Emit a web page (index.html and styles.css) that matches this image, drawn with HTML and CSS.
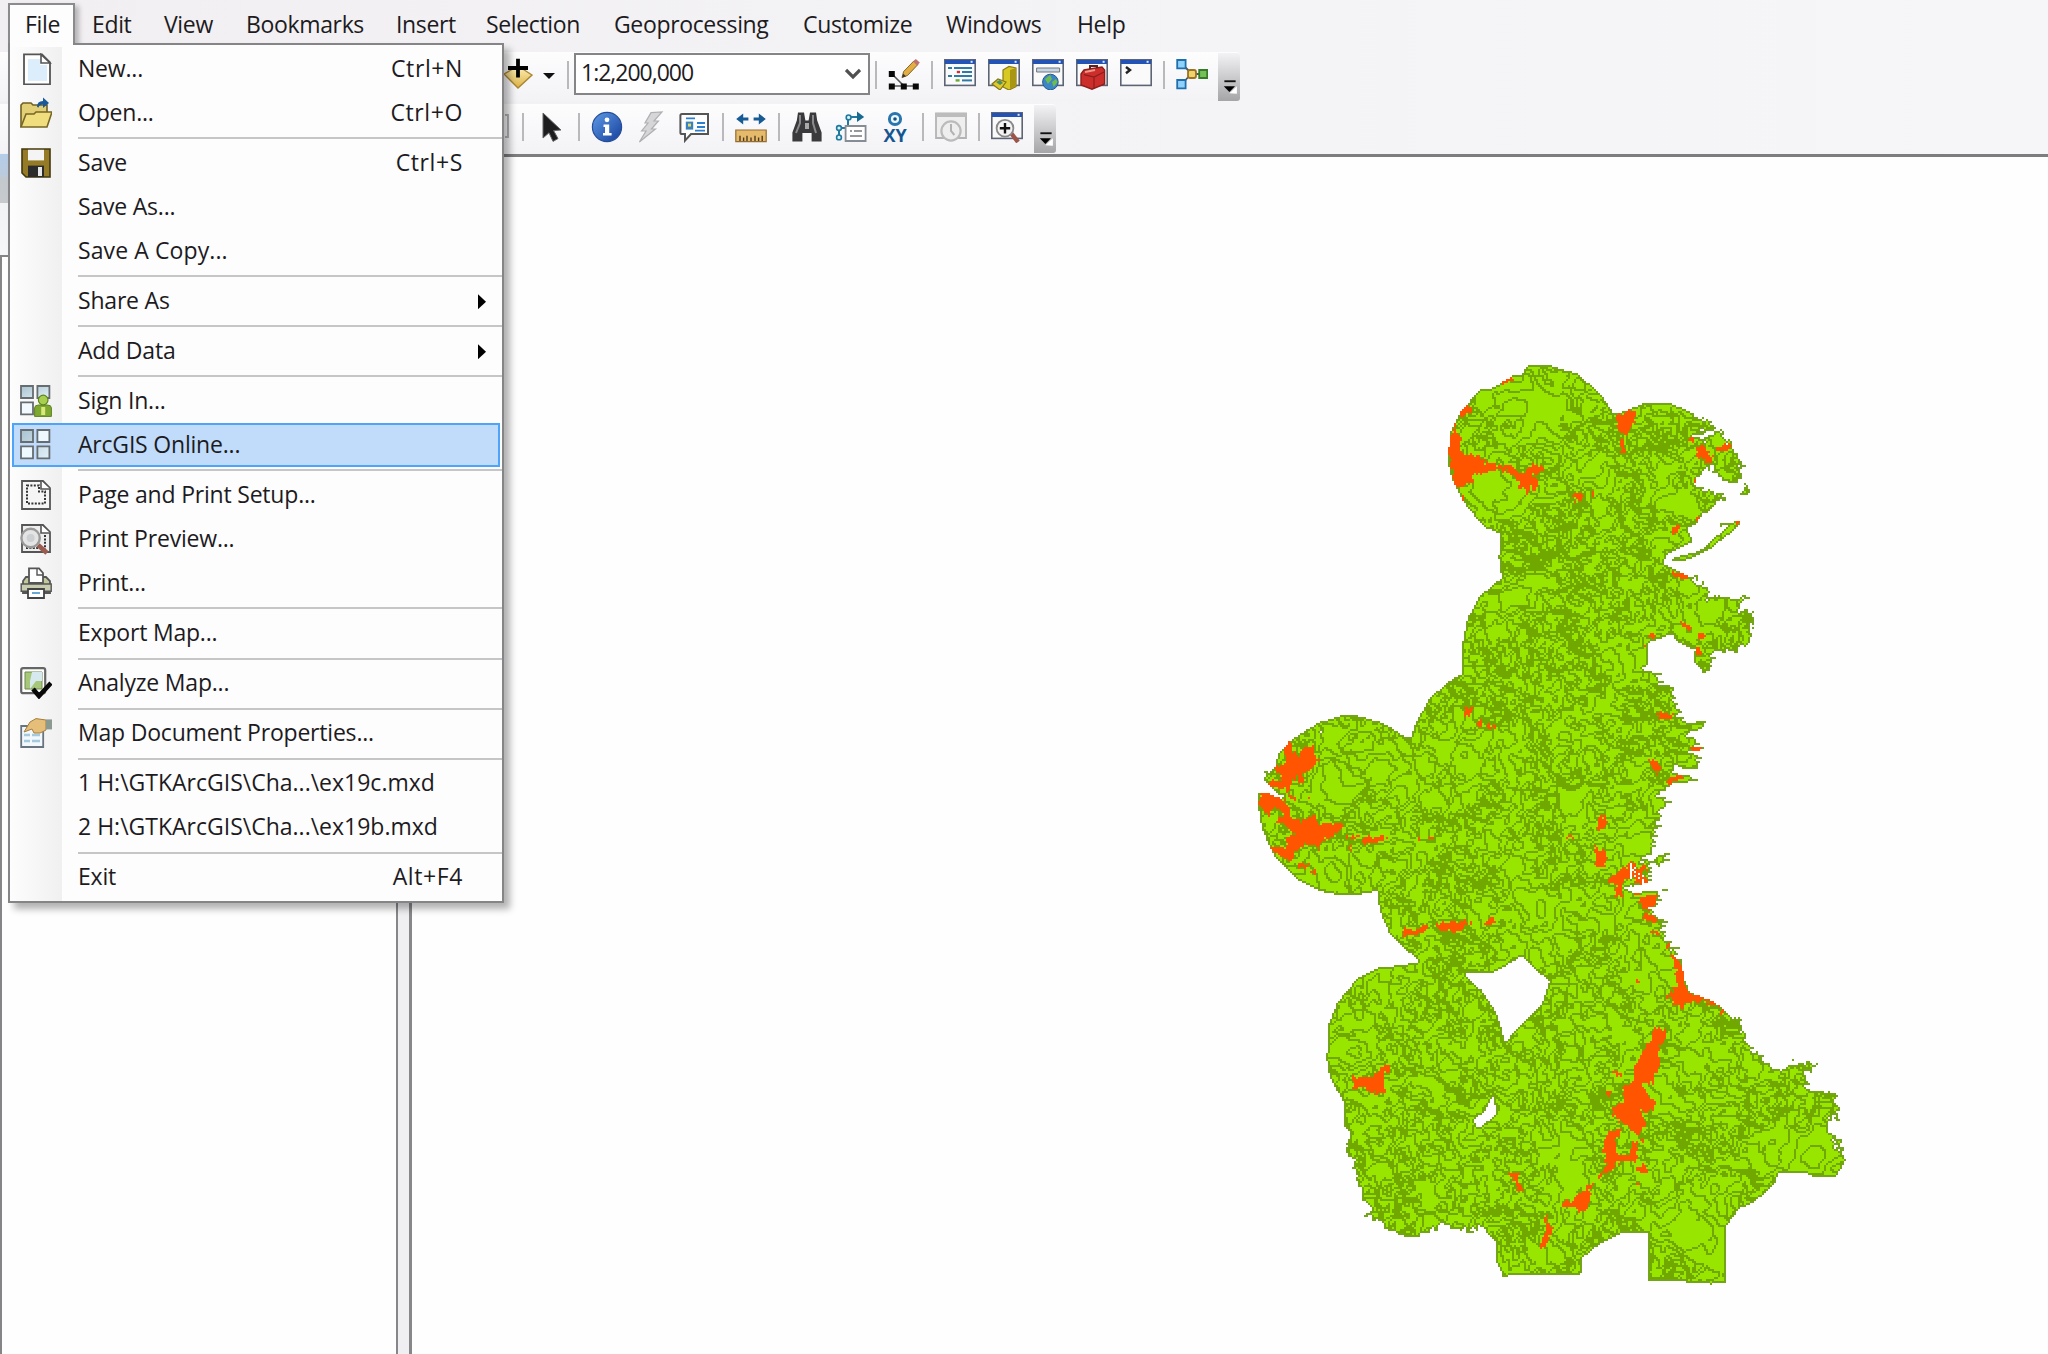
FILE: index.html
```html
<!DOCTYPE html>
<html lang="en">
<head>
<meta charset="utf-8">
<title>ArcMap</title>
<link rel="stylesheet" href="styles.css">
</head>
<body>
<svg class="defs" width="0" height="0">
  <defs>
    <linearGradient id="tile" x1="0" y1="0" x2="1" y2="1"><stop offset="0" stop-color="#a9c3d0"/><stop offset="1" stop-color="#e3f1f8"/></linearGradient>
    <linearGradient id="gold" x1="0" y1="0" x2="0" y2="1"><stop offset="0" stop-color="#fff2b8"/><stop offset="1" stop-color="#dcb045"/></linearGradient>
    <linearGradient id="blue" x1="0" y1="0" x2="1" y2="1"><stop offset="0" stop-color="#5f9be6"/><stop offset="1" stop-color="#153f9b"/></linearGradient>
    <symbol id="win" viewBox="0 0 16 16"><rect x=".4" y=".9" width="15.2" height="12.8" fill="#fafafa" stroke="#5d6473" stroke-width=".8"/><path d="M.5 1h15v2H.5z" fill="#2253b5"/><path d="M13.3 1.4h1v1h-1z" fill="#dfe9ff"/></symbol>
  </defs>
</svg>
<div class="app">
  <nav class="menubar">
    <span class="open">File</span><span>Edit</span><span>View</span><span>Bookmarks</span><span>Insert</span><span>Selection</span><span>Geoprocessing</span><span>Customize</span><span>Windows</span><span>Help</span>
  </nav>
  <div class="toolbar standard">
    <div class="tool"><svg viewBox="0 0 16 16"><path d="M1 8l7-4 7 4.5L8 15z" fill="url(#gold)" stroke="#a98634" stroke-width=".7"/><path d="M8 .4v9.4M3 5h10" stroke="#000" stroke-width="1.9"/></svg></div>
    <div class="drop"></div>
    <i class="sep"></i>
    <div class="combo"><span>1:2,200,000</span><svg viewBox="0 0 16 12"><path d="M1 2l7 7 7-7" fill="none" stroke="#505050" stroke-width="3.2"/></svg></div>
    <i class="sep"></i>
    <div class="tool"><svg viewBox="0 0 16 16"><path d="M2 8l6 6M2 14h12" stroke="#555" stroke-width=".8"/><path d="M.4 6.5h3v3h-3zM.4 12.7h3v3h-3zM6.4 12.7h3v3h-3zM12.4 12.7h3v3h-3z" fill="#080808"/><path d="M7 9.8l.8-3L13 1.4l2 1.8-5.2 5.5z" fill="#e2ad42" stroke="#80662f" stroke-width=".5"/><path d="M12.6 1.8l1.3-1.3 2 1.8-1.3 1.4z" fill="#bd706e"/><path d="M7 9.8l.6-1.9 1.4 1.2z" fill="#333"/></svg></div>
    <i class="sep"></i>
    <div class="tool"><svg viewBox="0 0 16 16"><use href="#win"/><path d="M2 5h2M5 5h9M5 9h9M2 9h2" stroke="#2e7ba8"/><path d="M6.4 7h1.6" stroke="#c33" stroke-width="1.2"/><path d="M9 7h5" stroke="#2e7ba8"/><path d="M5.8 11.2h2" stroke="#6a3" stroke-width="1.2"/><path d="M9 11.2h5" stroke="#2e7ba8"/></svg></div>
    <div class="tool"><svg viewBox="0 0 16 16"><use href="#win"/><path d="M7.5 6l3-1.8L14 5v9.3L10.500 16l-3-1.500z" fill="#d8c824" stroke="#8a7c15" stroke-width=".6"/><path d="M11 6v9.500l3-1.500V5z" fill="#a99714"/><path d="M2 13l3-2.500 4 1.500-3 4z" fill="#dfc92d" stroke="#82761a" stroke-width=".6"/><path d="M4 12l2-1 1.500 1.500-1.500 1z" fill="#4a8f65"/></svg></div>
    <div class="tool"><svg viewBox="0 0 16 16"><use href="#win"/><path d="M2.300 5h11.500v2H2.300z" fill="#c5d7e7" stroke="#777" stroke-width=".5"/><circle cx="9.200" cy="12" r="3.900" fill="#3d86c6" stroke="#27598f" stroke-width=".5"/><path d="M6.500 10.500l2.500-2 1 2-2 2.500zM10 12l2-1.500.8 1.500-2 2.500z" fill="#6fbd4c"/></svg></div>
    <div class="tool"><svg viewBox="0 0 16 16"><use href="#win"/><path d="M2.500 8L4 6l9-1.500 1.300 1.500v7L8 15.600 2.500 13.500z" fill="#cc2f2b" stroke="#8e1e1c" stroke-width=".7"/><path d="M4 8.300l5 1.200 5-2.500M9 9.500v5.500" stroke="#8c1d1b" stroke-width=".6" fill="none"/><path d="M7 5.500V4h3.500v1" stroke="#5b2222" fill="none"/><path d="M4.500 7l5-1" stroke="#f09688" stroke-width=".9"/></svg></div>
    <div class="tool"><svg viewBox="0 0 16 16"><use href="#win"/><path d="M3 4.500l2 1.500-2 1.600" fill="none" stroke="#222" stroke-width="1.200"/></svg></div>
    <i class="sep"></i>
    <div class="tool"><svg viewBox="0 0 16 16"><path d="M3 3l5 5h5M3 13l4.500-5" stroke="#555" stroke-width=".9" fill="none"/><path d="M.6 1h4.200v4.200H.6zM.6 11h4.200v4.200H.6z" fill="#8fd1f8" stroke="#1e6eb0" stroke-width=".9"/><rect x="6" y="6" width="4" height="4" rx="1" fill="#f2d36b" stroke="#9a7423" stroke-width=".9"/><path d="M11.600 6h4v4h-4z" fill="#74c157" stroke="#377a29" stroke-width=".9"/></svg></div>
    <div class="overflow"><svg viewBox="0 0 11 12"><path d="M1 1h9" stroke="#111" stroke-width="1.500"/><path d="M5 10.500l6-5.500v6z" fill="#fff"/><path d="M.5 5h9L5 9.500z" fill="#000"/></svg></div>
  </div>
  <div class="toolbar tools">
    <i class="sliver"></i>
    <i class="sep"></i>
    <div class="tool"><svg viewBox="0 0 16 16"><path d="M4 1l9 8.500-3.700.3 2.200 4-2.500 1.400-2-4.300L4 13.500z" fill="#1d1d1f" stroke="#666" stroke-width=".5"/></svg></div>
    <i class="sep"></i>
    <div class="tool"><svg viewBox="0 0 16 16"><circle cx="8" cy="8" r="7.300" fill="url(#blue)" stroke="#244c97" stroke-width=".6"/><circle cx="8" cy="4.400" r="1.200" fill="#fff"/><path d="M6.300 6.700h2.800V11h1.200v1.300H6V11h1V8h-.8z" fill="#fff"/></svg></div>
    <div class="tool"><svg viewBox="0 0 16 16"><path d="M8 .8l5.500-.3L9.500 5h2.200L8.200 9h2L2.200 15.500 5.500 10H3.300L6.500 6H5z" fill="#d6d6d8" stroke="#b0b0b3" stroke-width=".6"/></svg></div>
    <div class="tool"><svg viewBox="0 0 16 16"><path d="M1.500 1.500h13v10H6l-3 3.300v-3.300H1.500q-.8 0-.8-.8V2.300q0-.8.800-.8z" fill="#fff" stroke="#555" stroke-width="1"/><path d="M3.500 3.700h4.500M9 6h4M9 8h4M8 9.800h5" stroke="#2b80cf" stroke-width=".9"/><path d="M3.400 5.300h3.700v4H3.400z" fill="#3a82bd"/><path d="M4.500 6.300h1.500v1.500H4.500z" fill="#e8dc58"/></svg></div>
    <i class="sep"></i>
    <div class="tool"><svg viewBox="0 0 16 16"><path d="M.6 4l3.500-2.700v1.900h2.600v1.600H4.100v1.900zM15.400 4l-3.500-2.700v1.900H9.300v1.600h2.600v1.900z" fill="#165b94"/><path d="M.4 9.500h15.200v5.800H.4z" fill="#e5bb6b" stroke="#966d30" stroke-width=".6"/><path d="M2.500 15v-2.600M4.300 15v-1.700M6 15v-2.600M8 15v-1.700M10 15v-2.600M11.800 15v-1.700M13.600 15v-2.600" stroke="#503c20" stroke-width=".7"/></svg></div>
    <i class="sep"></i>
    <div class="tool"><svg viewBox="0 0 16 16"><path d="M3.500.8h3l.7 4h1.600l.7-4h3l.6 4 2.200 6v4.500h-5V11H5.700v4.300h-5v-4.500l2.200-6z" fill="#3a3a3c"/><path d="M4.500 2v4L2.500 11M11 2v4l1.500 5" stroke="#8a8a8d" fill="none"/><path d="M7 6h2v3H7z" fill="#aaa"/></svg></div>
    <div class="tool"><svg viewBox="0 0 16 16"><path d="M2 13V8.500h4.500V3H12" fill="none" stroke="#21799e" stroke-width="1"/><path d="M11 .3L14.600 3 11 5.500z" fill="#176b92"/><g fill="#d7f1fa" stroke="#21799e" stroke-width=".8"><circle cx="2" cy="13.200" r="1.200"/><circle cx="2" cy="8.500" r="1.200"/><circle cx="6.800" cy="3.200" r="1.200"/></g><path d="M5.300 7.500h10v7.500h-10z" fill="#fff" stroke="#878d94" stroke-width=".9"/><path d="M7.500 10h1M9.500 10h4M7.500 12.500h6" stroke="#777" stroke-width=".8"/></svg></div>
    <div class="tool xy"><svg viewBox="0 0 16 8"><circle cx="8" cy="4" r="2.800" fill="#eaf7ff" stroke="#2b75ae" stroke-width="1.500"/><circle cx="8" cy="4" r=".9" fill="#16507e"/></svg><b>XY</b></div>
    <i class="sep"></i>
    <div class="tool"><svg viewBox="0 0 16 16"><path d="M.5 1.200h15v12.300H.5z" fill="#eee" stroke="#b3b3b3" stroke-width=".9"/><path d="M.5 1h15v2H.5z" fill="#bcbcbc"/><circle cx="8" cy="10" r="4.800" fill="#eee" stroke="#bbb" stroke-width="1.100"/><path d="M8 6.500V10l1.700 2" fill="none" stroke="#b2b2b2"/></svg></div>
    <i class="sep"></i>
    <div class="tool"><svg viewBox="0 0 16 16"><use href="#win"/><path d="M10 11l3.500 4.500" stroke="#9c5549" stroke-width="2.200"/><circle cx="7" cy="8.600" r="4.200" fill="#f4f4f4" stroke="#8a8a8a" stroke-width=".9"/><path d="M7 6v5.200M4.400 8.600h5.200" stroke="#111" stroke-width="1.200"/></svg></div>
    <div class="overflow"><svg viewBox="0 0 11 12"><path d="M1 1h9" stroke="#111" stroke-width="1.500"/><path d="M5 10.500l6-5.500v6z" fill="#fff"/><path d="M.5 5h9L5 9.500z" fill="#000"/></svg></div>
  </div>
  <main class="workspace">
    <aside class="contents"><div class="caption"></div><div class="captiontools"></div><div class="tree"></div></aside>
    <div class="splitter"></div>
    <section class="mapview"><canvas id="map" class="map" width="310" height="475"></canvas></section>
  </main>

  <div class="menu">
    <div class="row"><svg viewBox="0 0 16 16"><path d="M2 .7h9l4 4v11H2z" fill="#fff" stroke="#555" stroke-width=".9"/><path d="M4 3h6v3h3.500v8H4z" fill="#dceefb"/><path d="M10.500.7v4.300H15z" fill="#fff" stroke="#555" stroke-width=".8"/></svg><span>New...</span><kbd>Ctrl+N</kbd></div>
    <div class="row"><svg viewBox="0 0 16 16"><path d="M.5 15V4l1-1h4l1 1h7v4" fill="#e3cf76" stroke="#6f6022" stroke-width=".8"/><path d="M.5 15L3 8.500h4l1-1h8L13.500 15z" fill="#efdd7e" stroke="#776625" stroke-width=".8"/><path d="M8.500 5q0-3 3-3V.300L14.500 3l-3 2.500V3.800q-2 0-2.200 1.500z" fill="#19599a"/></svg><span>Open...</span><kbd>Ctrl+O</kbd></div>
    <hr>
    <div class="row"><svg viewBox="0 0 16 16"><path d="M1 1h14v14H3l-2-2z" fill="#957b26" stroke="#44380f" stroke-width=".8"/><path d="M4 1.400h8v5.300H4z" fill="#f4f4f4"/><path d="M4 9.300h8V15H4z" fill="#2c2c2c"/><path d="M9 10h2v4.500H9z" fill="#e8e8e8"/></svg><span>Save</span><kbd>Ctrl+S</kbd></div>
    <div class="row"><span>Save As...</span></div>
    <div class="row wide"><span>Save A Copy...</span></div>
    <hr>
    <div class="row"><span>Share As</span><i class="arrow"></i></div>
    <hr>
    <div class="row"><span>Add Data</span><i class="arrow"></i></div>
    <hr>
    <div class="row"><svg viewBox="0 0 16 16"><g fill="url(#tile)" stroke="#666c70" stroke-width=".9"><path d="M.5.500h6v6h-6zM8.700.500h6v6h-6z"/><path d="M.5 8.700h6v6h-6z" fill="#f3faff"/></g><path d="M7.300 15.700v-4.200q0-1.500 2-1.500h4.400q2 0 2 1.500v4.200z" fill="#7ea82f" stroke="#5c8321" stroke-width=".5"/><circle cx="11.600" cy="7.500" r="2.400" fill="#a9cf4f" stroke="#5c8321" stroke-width=".6"/><path d="M11.600 11v4" stroke="#d6ea7d" stroke-width="2"/></svg><span>Sign In...</span></div>
    <div class="row selected"><svg viewBox="0 0 16 16"><g fill="url(#tile)" stroke="#666c70" stroke-width=".9"><path d="M.5.500h6v6h-6zM8.700 8.700h6v6h-6z"/><path d="M.5 8.700h6v6h-6zM8.700.500h6v6h-6z" fill="#eef8ff"/></g></svg><span>ArcGIS Online...</span></div>
    <hr>
    <div class="row"><svg viewBox="0 0 16 16"><path d="M1 1h10.500L15 4.500V15H1z" fill="#f5f5f5" stroke="#555" stroke-width=".9"/><path d="M10.500 1v4H15" fill="#fff" stroke="#555" stroke-width=".8"/><path d="M3.500 3.200h6v3h3v6h-9z" fill="none" stroke="#333" stroke-dasharray="1 .7"/></svg><span>Page and Print Setup...</span></div>
    <div class="row"><svg viewBox="0 0 16 16"><path d="M1 1h10.500L15 4.500V14.500H1z" fill="#eee" stroke="#555" stroke-width=".9"/><path d="M10.500 1v4H15" fill="#fff" stroke="#555" stroke-width=".8"/><path d="M12.500 6v7M3 12.500h6" stroke="#333" stroke-dasharray="1 .7"/><path d="M9 11l4.500 4" stroke="#9b5c50" stroke-width="2.400"/><circle cx="5.300" cy="7.500" r="4.600" fill="#e4e4e4" stroke="#999" stroke-width="1.200"/><circle cx="5.300" cy="7.500" r="2" fill="#ccd0d2"/></svg><span>Print Preview...</span></div>
    <div class="row"><svg viewBox="0 0 16 16"><path d="M1.500 13V7L3 5h10l2 2v6z" fill="#c2c79c" stroke="#555" stroke-width=".9"/><path d="M4.500 8V.700h5L11.500 3v5z" fill="#fff" stroke="#555" stroke-width=".9"/><path d="M8.500.700V4h3" fill="none" stroke="#555" stroke-width=".7"/><path d="M.6 8.500h15v3.600H.6z" fill="#c9cdb0" stroke="#555" stroke-width=".7"/><path d="M4 11h8v4.500H4z" fill="#fff" stroke="#444" stroke-width=".9"/><path d="M6 13h4" stroke="#6ba7d3"/></svg><span>Print...</span></div>
    <hr>
    <div class="row"><span>Export Map...</span></div>
    <hr>
    <div class="row"><svg viewBox="0 0 16 16"><rect x=".6" y=".6" width="12" height="12.500" rx="1" fill="#fff" stroke="#666" stroke-width="1.100"/><path d="M2.500 2.500h8.500v8.500H2.500z" fill="#a8c879" stroke="#6d8a4a" stroke-width=".5"/><path d="M6 2.500h5V7H8l-3 4V7z" fill="#d5e9ee"/><path d="M6.500 11l3 3.500L15.500 8" fill="none" stroke="#080808" stroke-width="2.300"/></svg><span>Analyze Map...</span></div>
    <hr>
    <div class="row"><svg viewBox="0 0 16 16"><path d="M.600 4.500h11v10.500H.600z" fill="#f2f8fc" stroke="#69757e" stroke-width=".9"/><path d="M2 9h3M6 9h4M2 12h3M6 12h4" stroke="#a5c9df" stroke-width="1.200"/><path d="M2 7.500L5 2.500 8 .800l5 .700v5L10 8H7L6 6z" fill="#e5bf79" stroke="#a47e3d" stroke-width=".5"/><path d="M13 1.200h3v5h-3z" fill="#8b9a91"/></svg><span>Map Document Properties...</span></div>
    <hr>
    <div class="row recent"><span>1 H:\GTKArcGIS\Cha...\ex19c.mxd</span></div>
    <div class="row recent"><span>2 H:\GTKArcGIS\Cha...\ex19b.mxd</span></div>
    <hr>
    <div class="row"><span>Exit</span><kbd>Alt+F4</kbd></div>
  </div>
</div>
<script src="map.js"></script>
</body>
</html>
```
FILE: styles.css
```css
* { box-sizing: border-box; }
body {
  margin: 0;
  width: 2048px;
  height: 1354px;
  overflow: hidden;
  font-family: "Open Sans", "Noto Sans", sans-serif;
  font-size: 23px;
  letter-spacing: -0.35px;
  color: #1d1b22;
}
.defs { display: block; position: absolute; }
.app {
  position: relative;
  display: flex;
  flex-direction: column;
  height: 1354px;
  background: linear-gradient(90deg, #f1eff1, #f4f3f5 60%, #f6f6f8);
}
.menubar {
  display: grid;
  grid-template-columns: 67px 72px 82px 150px 90px 128px 189px 143px 131px 80px;
  padding-left: 8px;
  height: 52px;
  line-height: 48px;
  white-space: nowrap;
}
.menubar span { padding-left: 17px; }
.menubar .open {
  margin-top: 3px;
  height: 49px;
  line-height: 38px;
  padding-left: 15px;
  background: #fdfdfe;
  border: 2px solid #8b8b8d;
  border-bottom: 0;
  box-shadow: 4px 3px 5px rgba(0, 0, 0, .25);
}
.toolbar { display: flex; align-items: center; height: 49px; border-radius: 0 4px 4px 0; background: linear-gradient(#fdfdfe, #f3f2f5); }
.standard { width: 1240px; padding-left: 496px; }
.tools { width: 1056px; padding-left: 505px; margin: 3px 0 1px; }
.tool { width: 44px; height: 32px; display: flex; flex-direction: column; align-items: center; }
.standard .tool { margin-top: -6px; }
.standard .sep { margin-top: -3px; }
.tools .tool, .tools .sep { margin-top: -4px; }
.tool svg { width: 32px; height: 32px; display: block; }
.xy svg { height: 16px; }
.xy b { font-size: 18px; line-height: 16px; letter-spacing: 0; color: #155691; }
.sep { width: 12px; height: 28px; background: linear-gradient(#b9b9bc, #b9b9bc) 5px 0 / 2px 100% no-repeat; }
.sliver { width: 4px; height: 24px; margin: -5px 8px 0 0; border: 2px solid #b5b5b7; border-left: 0; }
.drop { width: 22px; height: 7px; background: #111; clip-path: polygon(3px 0, 15px 0, 9px 6px); }
.combo {
  width: 296px;
  height: 42px;
  margin-top: -6px;
  padding: 0 7px 4px 5px;
  display: flex;
  align-items: center;
  justify-content: space-between;
  background: #fff;
  border: 2px solid #858587;
  letter-spacing: -1px;
}
.combo svg { width: 16px; height: 12px; margin-top: 5px; }
.overflow {
  width: 22px;
  height: 48px;
  margin-left: auto;
  padding: 27px 0 0 5px;
  border-radius: 0 3px 3px 0;
  background: linear-gradient(#f3f3f5, #a5a5a7);
}
.overflow svg { display: block; width: 14px; height: 15px; }
.workspace { flex: 1; display: flex; border-top: 3px solid #7d7d80; background: #fefefe; }
.contents { width: 396px; margin-top: -3px; background: #f0eff2; display: flex; flex-direction: column; }
.caption { height: 49px; background: linear-gradient(#b4cde9, #bccbdd 22px, #c4c9cd 24px, #c6cacd); }
.captiontools { height: 52px; background: linear-gradient(#f2f3f5, #f4f6f7); }
.tree { flex: 1; background: #fefefe; border: 2px solid #858588; border-right: 0; border-bottom: 0; }
.splitter { width: 16px; border: solid #87878a; border-width: 0 3px 0 2px; background: #efeef1; }
.mapview { flex: 1; background: #fefefe; }
.map { display: block; width: 620px; height: 950px; margin: 194px 0 0 828px; image-rendering: pixelated; }

.menu {
  position: absolute;
  left: 8px;
  top: 43px;
  width: 496px;
  height: 860px;
  padding: 2px 0 0;
  border: 2px solid #858587;
  background: linear-gradient(90deg, #fdfdfe, #f0f0f1 52px, #fdfdfe 52px);
  box-shadow: 6px 6px 7px rgba(0, 0, 0, .3);
}
.menu::before {
  content: "";
  position: absolute;
  left: 0;
  top: -3px;
  width: 63px;
  height: 5px;
  background: #fdfdfe;
}
.row { position: relative; height: 44px; padding-left: 68px; padding-right: 39px; display: flex; align-items: center; line-height: 44px; white-space: nowrap; letter-spacing: -0.2px; }
.recent { letter-spacing: 0; }
.wide { letter-spacing: .1px; }
.row span, .row kbd { margin-top: -3px; }
.row svg { width: 32px; height: 32px; margin: -1px 26px 0 -58px; }
.row kbd { margin-left: auto; font: inherit; letter-spacing: .6px; }
.arrow { position: absolute; right: 16px; top: 15px; width: 8px; height: 15px; background: #000; clip-path: polygon(0 0, 100% 50%, 0 100%); }
.menu hr { margin: 0 0 0 68px; height: 6.1px; border: 0; background: linear-gradient(#c6c6c8, #c6c6c8) 0 2px / 100% 2px no-repeat; }
.selected { z-index: 0; }
.selected::before { content: ""; position: absolute; z-index: -1; inset: 0 2px 0 2px; background: #c0dcfa; border: 2px solid #4da4f8; }
```
FILE: map.js
```js
(function () {
  var canvas = document.getElementById('map');
  var W = canvas.width, H = canvas.height;
  var X0 = 1240, Y0 = 350, CELL = 2;

  var WIDEN = 15 / 14, SHEET_X = 1300;
  function widen(p) {
    return p.map(function (v, i) { return i % 2 ? v : (v - SHEET_X) * WIDEN + SHEET_X; });
  }

  var northEast = [1527,365,1552,365,1577,373,1600,392,1613,412,1617,413,1633,407,1643,403,1672,403,1693,412,1713,423,1728,440,1737,453,1742,468,1743,480,1728,482,1715,473,1710,462,1703,473,1693,482,1700,490,1720,492,1725,497,1717,503,1703,512,1697,522,1687,527,1693,540,1677,548,1667,553,1663,562,1677,570,1693,577,1707,588,1708,598,1720,593,1725,598,1750,597,1737,607,1753,613,1752,640,1733,650,1715,653,1705,673,1697,667,1693,648,1677,640,1672,633,1647,642,1649,663,1640,668,1658,673,1660,682,1670,687,1680,705,1677,713,1687,722,1708,720,1690,735,1703,750,1687,750,1699,758,1698,767,1683,768,1675,763,1673,772,1697,778,1667,785,1657,795,1670,797,1662,808,1658,827,1653,840,1657,850,1637,863,1647,863,1647,880,1623,887,1637,893,1663,888,1662,900,1648,910,1662,917,1665,930,1670,943,1680,957,1685,980,1690,992,1713,1000];
  var south = [1697,1010,1710,1020,1715,1037,1730,1057,1743,1067,1762,1063,1780,1063,1780,1069,1772,1072,1771,1087,1798,1093,1802,1105,1793,1123,1800,1143,1805,1153,1805,1167,1800,1176,1777,1175,1772,1171,1747,1171,1743,1183,1723,1202,1710,1207,1698,1225,1697,1282,1683,1283,1667,1281,1624,1280,1624,1231,1602,1231,1580,1243,1563,1257,1562,1274,1500,1273,1490,1276,1483,1260,1483,1240,1470,1226,1453,1230,1433,1222,1413,1233,1393,1235,1380,1227,1362,1215,1368,1207,1353,1187,1355,1170,1343,1152,1348,1133,1342,1127,1342,1103,1328,1077,1325,1057,1327,1023,1335,1002,1353,978,1373,967,1410,962];
  var west = [1420,960,1405,948,1390,933,1380,910,1377,890,1357,894,1340,894,1320,890,1300,880,1273,853,1262,827,1258,803,1258,792,1276,792,1263,777,1275,767,1278,753,1290,740,1318,722,1340,715,1358,715,1383,722,1407,737,1411,736,1417,720,1430,697,1450,680,1463,672,1463,640,1468,617,1480,595,1502,577,1499,557,1500,533,1483,525,1463,500,1453,480,1448,463,1450,433,1460,412,1480,388,1493,387,1513,375,1522,373];
  var land = northEast.concat(widen(south), west);
  var islands = [
    [1673,557,1700,550,1718,534,1733,522,1740,520,1738,526,1720,540,1707,550,1686,559,1673,561],
    [1718,523,1735,521,1735,524,1720,525], [1741,490,1745,483,1745,496,1741,496],
    [1657,860,1662,854,1670,851,1668,858,1658,866], [1643,862,1652,858,1660,860,1646,865],
    widen([1790,1108,1803,1105,1802,1118,1796,1117]), widen([1797,1133,1805,1138,1807,1150,1803,1150]), [1672,946,1680,946,1677,950],
    [1264,771,1268,769,1267,775]
  ];
  var holes = [
    widen([1453,973,1482,971,1507,955,1533,981,1525,1005,1500,1030,1492,1042,1483,1012,1470,990]),
    widen([1480,1095,1484,1113,1466,1128,1462,1118,1473,1110]),
    [1692,435,1703,431,1706,428,1715,432,1705,438,1696,439],
    widen([1790,1115,1799,1108,1797,1115,1792,1118]), widen([1797,1136,1805,1148,1803,1152]),
    [1262,787,1284,795,1282,798,1266,792], [1630,862,1632,862,1632,878,1630,878], [1638,872,1641,872,1641,884,1638,884],
    [1320,730,1323,728,1322,735]
  ];
  // Each group: origin x, origin y, x unit, polygons; the y unit is a third of a pixel.
  var risk = [
    [1400, 340, 1 / 3, [
      [145,320,183,318,190,335,215,335,228,350,250,350,258,368,330,372,375,400,402,365,432,378,400,410,420,430,412,445,388,430,385,462,365,450,345,405,300,386,225,398,218,428,190,425,190,440,165,438,150,375],
      [305,118,345,103,345,112,310,125], [195,182,213,200,213,218,175,220], [155,268,185,280,185,320,150,320], [163,240,174,250,163,262], [180,465,198,465,190,478],
      [648,222,706,200,700,245,685,280,655,270], [660,295,672,295,670,338,660,335], [518,460,545,453,552,490,542,490],
      [558,515,577,530,560,534], [570,455,582,465,570,468], [885,325,910,310,925,340,920,360,890,340], [925,345,940,340,935,365,915,370],
      [948,318,990,312,995,325,950,330], [865,290,887,290,887,302,868,302], [870,410,897,408,890,420], [890,520,905,540,892,545],
      [818,555,840,560,835,578,818,575], [1000,543,1024,540,1015,558], [818,695,862,700,862,712,820,710],
      [840,840,870,855,868,870,845,857], [888,883,922,872,918,887,895,900], [886,918,902,918,900,942,888,940],
      [190,1100,217,1100,214,1124,195,1122], [775,1120,827,1116,820,1131,775,1132], [748,884,766,884,764,892,750,890], [732,915,740,915,738,928,732,926]
    ]],
    [1240, 680, 1 / 3, [
      [130,190,155,185,158,212,178,222,190,200,225,193,220,230,245,238,205,265,185,275,192,305,178,300,172,278,150,320,135,335,125,318,95,315,90,298,120,300,130,285,105,262,140,245],
      [58,330,120,345,150,385,147,400,105,380,80,402,57,375], [145,335,172,355,148,360], [195,340,215,345,200,350],
      [110,415,140,395,160,412,185,420,220,398,235,430,300,425,312,435,250,480,245,510,215,488,180,500,150,537,95,515,100,500,140,505,140,465,165,455],
      [165,540,203,552,207,568,175,554], [218,568,236,575,222,582], [338,462,356,462,354,472,340,470], [368,470,440,464,442,476,370,490], [314,460,324,464,318,472], [328,488,338,495,330,504],
      [530,470,540,466,540,478,534,480], [560,462,577,460,575,472,562,470], [485,748,562,738,560,752,490,767], [590,730,695,720,690,737,650,752,592,750], [735,720,768,706,762,720,738,734],
      [672,80,697,85,692,107,675,102], [708,118,770,135,762,147,712,130], [1255,102,1312,96,1300,109,1258,112], [1350,190,1388,198,1385,212,1352,203],
      [1275,300,1330,276,1326,292,1290,308], [1075,410,1102,405,1092,442,1070,447], [1056,500,1100,513,1100,555,1063,555,1070,525], [985,458,1002,465,988,474],
      [1105,595,1150,560,1180,545,1185,570,1220,548,1217,560,1195,580,1222,590,1222,617,1190,605,1180,585,1165,600,1145,605,1150,655,1130,640,1132,612,1110,614],
      [1200,650,1245,640,1250,665,1225,692,1205,670], [1190,632,1204,640,1192,645], [1210,700,1257,708,1252,722,1215,717], [1232,742,1257,750,1252,770], [1283,785,1297,800,1286,804],
      [1296,818,1320,840,1335,900,1345,935,1362,940,1385,930,1375,942,1410,945,1415,955,1385,955,1375,972,1340,962,1328,987,1310,975,1283,950,1305,920,1318,910,1305,870],
      [1400,955,1440,970,1438,976,1400,962], [1188,896,1207,900,1195,910], [1225,235,1237,235,1257,250,1257,275,1245,272]
    ]],
    [1300, 940, 1 / 2.8, [
      [990,257,1025,265,1020,300,1005,320,1008,370,985,430,960,425,975,470,1000,485,985,505,950,510,970,545,945,582,905,545,875,525,878,500,905,490,910,435,930,430,950,350,970,310,985,300],
      [145,405,205,408,238,370,258,378,232,405,242,460,205,450,150,442],
      [855,585,885,562,905,565,887,592,887,640,925,640,930,600,944,600,944,657,895,657,870,692,830,712,862,670,851,630],
      [915,678,955,685,962,662,978,695,960,705,940,690], [770,760,800,750,808,725,817,727,810,775,802,802,780,818,760,795,735,797,738,778,765,782],
      [588,695,608,693,622,747,612,748,602,715,590,712], [678,820,707,855,697,875,690,917,672,917,675,895,690,885,690,855],
      [880,390,908,393,890,412], [853,452,873,452,866,470], [955,592,972,598,955,604], [942,728,954,735,946,742], [1178,200,1194,212,1182,214]
    ]]
  ];
  // Quiet (x, y, radius, +) and busy (x, y, radius, -) areas of the polygon layer.
  var tone = [[1535,395,36,1],[1492,475,20,1],[1510,500,34,1],[1500,392,24,1],[1518,425,22,.7],[1680,500,30,.9],[1635,650,32,1.1],[1595,470,16,.8],[1520,585,28,.7],[1700,610,18,1],
    [1340,730,28,.9],[1335,785,32,1.2],[1378,765,22,.8],[1385,860,26,.9],[1340,870,24,.7],[1640,840,26,1.2],[1620,800,20,.7],[1565,935,20,1],[1660,970,24,1.2],[1610,905,22,.8],[1540,905,24,.7],
    [1380,990,34,.9],[1350,1050,34,1],[1434,1080,22,.8],[1568,1160,30,.9],[1820,1150,34,1.4],[1780,1165,30,.8],[1718,1090,28,.5],[1685,1220,40,.8],[1705,1250,24,.8],[1632,1215,26,.6],[1562,1250,16,.7],[1750,1060,24,.6],[1520,815,18,.6],[1560,820,18,.6],[1425,800,20,.7],[1375,1105,24,.6],
    [1520,540,34,-.8],[1600,550,40,-.5],[1500,690,36,-.5],[1530,650,50,-.4],[1480,950,26,-1],[1440,890,28,-.7],[1460,820,34,-.5],[1450,1010,28,-.7],[1460,1090,26,-.8],[1440,1135,24,-1],[1396,1180,34,-.9],[1418,1210,30,-.6],[1514,1230,24,-.5],[1664,1265,20,-.9],[1570,750,34,-.4],[1740,475,14,-1],[1745,620,14,-1],[1365,802,14,-1]];

  function hash(x, y, s) {
    var h = Math.imul(x, 374761393) ^ Math.imul(y, 668265263) ^ Math.imul(s, 1274126177);
    h = Math.imul(h ^ (h >>> 13), 1274126177);
    return ((h ^ (h >>> 16)) >>> 0) / 4294967296;
  }
  function noise(x, y, s) {
    var i = Math.floor(x), j = Math.floor(y), u = x - i, v = y - j;
    u = u * u * (3 - 2 * u); v = v * v * (3 - 2 * v);
    var a = hash(i, j, s), b = hash(i + 1, j, s), c = hash(i, j + 1, s), d = hash(i + 1, j + 1, s);
    return a + (b - a) * u + (c - a) * v + (a - b - c + d) * u * v;
  }
  function raster(draw) {
    var c = document.createElement('canvas');
    c.width = W; c.height = H;
    var g = c.getContext('2d');
    draw(g);
    return g.getImageData(0, 0, W, H).data;
  }
  function poly(g, p, ox, oy, kx, ky) {
    g.beginPath();
    for (var i = 0; i < p.length; i += 2) g.lineTo((p[i] * kx + ox - X0) / CELL, (p[i + 1] * ky + oy - Y0) / CELL);
    g.closePath();
    g.fill();
  }
  var landMask = raster(function (g) {
    poly(g, land, 0, 0, 1, 1);
    islands.forEach(function (p) { poly(g, p, 0, 0, 1, 1); });
    g.globalCompositeOperation = 'destination-out';
    holes.forEach(function (p) { poly(g, p, 0, 0, 1, 1); });
  });
  var riskMask = raster(function (g) {
    risk.forEach(function (r) { r[3].forEach(function (p) { poly(g, p, r[0], r[1], r[2], 1 / 3); }); });
  });
  function on(mask, x, y) {
    return x >= 0 && y >= 0 && x < W && y < H && mask[(y * W + x) * 4 + 3] > 110;
  }
  function isLand(x, y) {
    var px = x * CELL + X0, py = y * CELL + Y0, dx = 0, dy = 0;
    if (px > 1630 && py > 670 && py < 960) dx = Math.round((hash(1, y, 5) - .5) * 5);
    else if (px > 1690 && py < 670 && !(py > 510 && py < 565)) { dx = Math.round((noise(x / 1.5, y / 1.5, 8) - .5) * 4); dy = Math.round((noise(x / 1.5, y / 1.5, 9) - .5) * 4); }
    else if ((px > 1725 && py > 1000 && py < 1165) || (px < 1480 && py > 1130)) { dx = Math.round((noise(x / 2, y / 2, 8) - .5) * 4); dy = Math.round((noise(x / 2, y / 2, 9) - .5) * 4); }
    return on(landMask, x + dx, y + dy);
  }
  function isRisk(x, y) {
    return on(riskMask, x + Math.round((noise(x / 1.6, y / 1.6, 21) - .5) * 2.2), y + Math.round((noise(x / 1.6, y / 1.6, 22) - .5) * 2.2));
  }

  var cls = new Float32Array(W * H);
  for (var y = 0; y < H; y++) for (var x = 0; x < W; x++) {
    var px = x * CELL + X0, py = y * CELL + Y0, t = (noise(x / 14, y / 14, 3) - .5) * 1.3;
    tone.forEach(function (q) {
      var d = ((px - q[0]) * (px - q[0]) + (py - q[1]) * (py - q[1])) / (q[2] * q[2]);
      if (d < 4) t += q[3] * Math.exp(-d * 1.3);
    });
    var detail = Math.max(.1, Math.min(1.7, 1.08 - t));
    var wx = x + (noise(x / 3.5, y / 3.5, 11) - .5) * 6, wy = y + (noise(x / 3.5, y / 3.5, 12) - .5) * 6;
    var n = noise(wx / 15, wy / 13, 1) * 2.8 + noise(wx / 6, wy / 5.5, 2) * 2.7 * detail + noise(x / 3.2, y / 3, 4) * .9 * detail;
    cls[y * W + x] = Math.floor(n * 1.2);
  }

  var g = canvas.getContext('2d');
  for (y = 0; y < H; y++) for (x = 0; x < W; x++) {
    if (!isLand(x, y)) continue;
    var k = y * W + x, c;
    if (isRisk(x, y)) c = '#ff5500';
    else if (!isLand(x - 1, y) || !isLand(x + 1, y) || !isLand(x, y - 1) || !isLand(x, y + 1)) c = '#72a617';
    else c = cls[k] !== cls[k + 1] || cls[k] !== cls[k + W] ? '#70a800' : '#98e600';
    g.fillStyle = c;
    g.fillRect(x, y, 1, 1);
  }
})();
```
